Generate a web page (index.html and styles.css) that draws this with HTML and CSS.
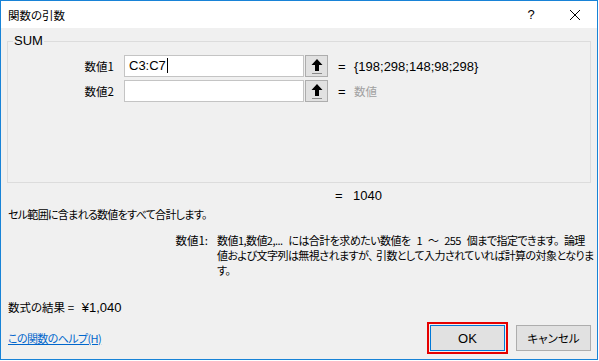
FILE: index.html
```html
<!DOCTYPE html>
<html lang="ja">
<head>
    <meta charset="UTF-8">
    <title>関数の引数</title>
    <link rel="stylesheet" href="styles.css">
</head>
<body>
    <div class="window">
        <div class="title-bar">
            <div class="title">関数の引数</div>
            <div class="title-btn help">?</div>
            <div class="title-btn close">
                <svg width="12" height="12" viewBox="0 0 12 12"><path d="M1 1 L11 11 M11 1 L1 11" stroke="#000" stroke-width="1"/></svg>
            </div>
        </div>

        <div class="content">
            <fieldset class="group">
                <legend>SUM</legend>
                <div class="arg-row">
                    <label class="arg-label">数値1</label>
                    <div class="arg-input">C3:C7<span class="caret"></span></div>
                    <div class="ref-btn">
                        <svg width="12" height="17" viewBox="0 0 12 17"><path d="M6 1 L0.5 7 H4 V13 H8 V7 H11.5 Z" fill="#000"/><rect x="1" y="15" width="10" height="1" fill="#8a8a8a"/></svg>
                    </div>
                    <span class="eq">=</span>
                    <span class="arg-value">{198;298;148;98;298}</span>
                </div>
                <div class="arg-row">
                    <label class="arg-label">数値2</label>
                    <div class="arg-input"></div>
                    <div class="ref-btn">
                        <svg width="12" height="17" viewBox="0 0 12 17"><path d="M6 1 L0.5 7 H4 V13 H8 V7 H11.5 Z" fill="#000"/><rect x="1" y="15" width="10" height="1" fill="#8a8a8a"/></svg>
                    </div>
                    <span class="eq">=</span>
                    <span class="arg-value hint">数値</span>
                </div>
            </fieldset>

            <div class="total"><span class="eq">=</span><span>1040</span></div>

            <div class="summary">セル範囲に含まれる数値をすべて合計します。</div>

            <div class="detail">
                <div class="detail-name">数値1:</div>
                <div class="detail-text">数値1,数値2,... には合計を求めたい数値を 1 ～ 255 個まで指定できます<span class="punct">。</span>論理<br>値および文字列は無視されますが<span class="punct comma">、</span>引数として入力されていれば計算の対象となりま<br>す。</div>
            </div>

            <div class="result">数式の結果 =&nbsp;&nbsp; <span class="num">¥1,040</span></div>

            <div class="footer">
                <a class="help-link" href="#">この関数のヘルプ(H)</a>
                <div class="buttons">
                    <div class="ok-frame"><button class="btn ok">OK</button></div>
                    <button class="btn">キャンセル</button>
                </div>
            </div>
        </div>
    </div>
</body>
</html>
```

FILE: styles.css
```css
/* Basic Reset */
* { margin: 0; padding: 0; box-sizing: border-box; }
body { width: 599px; height: 361px; background: #fff; font-family: "Noto Sans CJK JP", "Noto Sans", sans-serif; font-size: 11px; color: #000; font-feature-settings: "palt"; }

/* Window */
.window { width: 598px; height: 360px; border: 1px solid #1883d7; background: #f0f0f0; display: flex; flex-direction: column; }

.title-bar { height: 27px; background: #fff; display: flex; align-items: center; padding-left: 7px; }
.title { flex-grow: 1; font-size: 11.5px; color: #000; }
.title-btn { width: 44px; height: 27px; display: flex; align-items: center; justify-content: center; }
.help { font-family: "Liberation Sans", sans-serif; font-size: 13px; }

/* Content */
.content { flex-grow: 1; padding: 6px 6px 0 6px; display: flex; flex-direction: column; }

.group { border: 1px solid #dcdcdc; height: 150px; padding: 6px 0 0 0; margin-top: -1px; }
.group legend { margin-left: 5px; padding: 0 1px; font-family: "Liberation Sans", sans-serif; font-size: 13px; line-height: 16px; }

.arg-row { display: flex; align-items: center; height: 22px; margin-bottom: 3px; }
.arg-label { width: 116px; text-align: right; padding-right: 10px; font-size: 11.5px; }
.arg-input { width: 180px; height: 22px; background: #fff; border: 1px solid #c4c4c4; padding: 0 4px; font-family: "Liberation Sans", sans-serif; font-size: 13px; line-height: 20px; }
.caret { display: inline-block; width: 1px; height: 15px; background: #000; vertical-align: -3px; margin-left: 1px; }
.ref-btn { width: 23px; height: 22px; margin-left: 1px; background: #e1e1e1; border: 1px solid #adadad; display: flex; align-items: center; justify-content: center; }
.eq { width: 26px; padding-left: 10px; font-family: "Liberation Sans", sans-serif; font-size: 13px; }
.arg-value { font-family: "Liberation Sans", sans-serif; font-size: 13px; }
.arg-value.hint { font-family: "Noto Sans CJK JP", sans-serif; font-size: 11.5px; color: #a0a0a0; }

.total { display: flex; margin-top: 5px; padding-left: 322px; font-family: "Liberation Sans", sans-serif; font-size: 13px; line-height: 16px; }
.total .eq { width: 24px; padding-left: 6px; }

.summary { margin-top: 1px; padding-left: 1px; line-height: 18px; letter-spacing: -0.7px; }

.detail { display: flex; margin-top: 10px; line-height: 15px; }
.detail-name { width: 210px; text-align: right; padding-right: 9px; flex-shrink: 0; font-size: 11.5px; }
.detail-text { white-space: nowrap; letter-spacing: -0.55px; word-spacing: 4px; }
.punct { margin-right: 5px; }
.punct.comma { margin-right: 3px; }

.result { margin-top: 20px; padding-left: 1px; line-height: 18px; font-size: 11.5px; }
.result .num { font-family: "Liberation Sans", sans-serif; font-size: 13px; }

.footer { display: flex; align-items: flex-end; justify-content: space-between; margin-top: auto; padding: 0 0 5px 1px; }
.help-link { color: #0066cc; text-decoration: underline; margin-bottom: 8px; letter-spacing: -0.6px; }
.buttons { display: flex; align-items: center; gap: 8px; }
.ok-frame { border: 2px solid #e60000; padding: 1px; }
.btn { width: 75px; height: 26px; background: #e1e1e1; border: 1px solid #adadad; font-family: "Noto Sans CJK JP", sans-serif; font-size: 11.5px; font-feature-settings: "palt"; color: #000; }
.btn.ok { border-color: #0078d7; font-family: "Liberation Sans", sans-serif; font-size: 13px; }
```
